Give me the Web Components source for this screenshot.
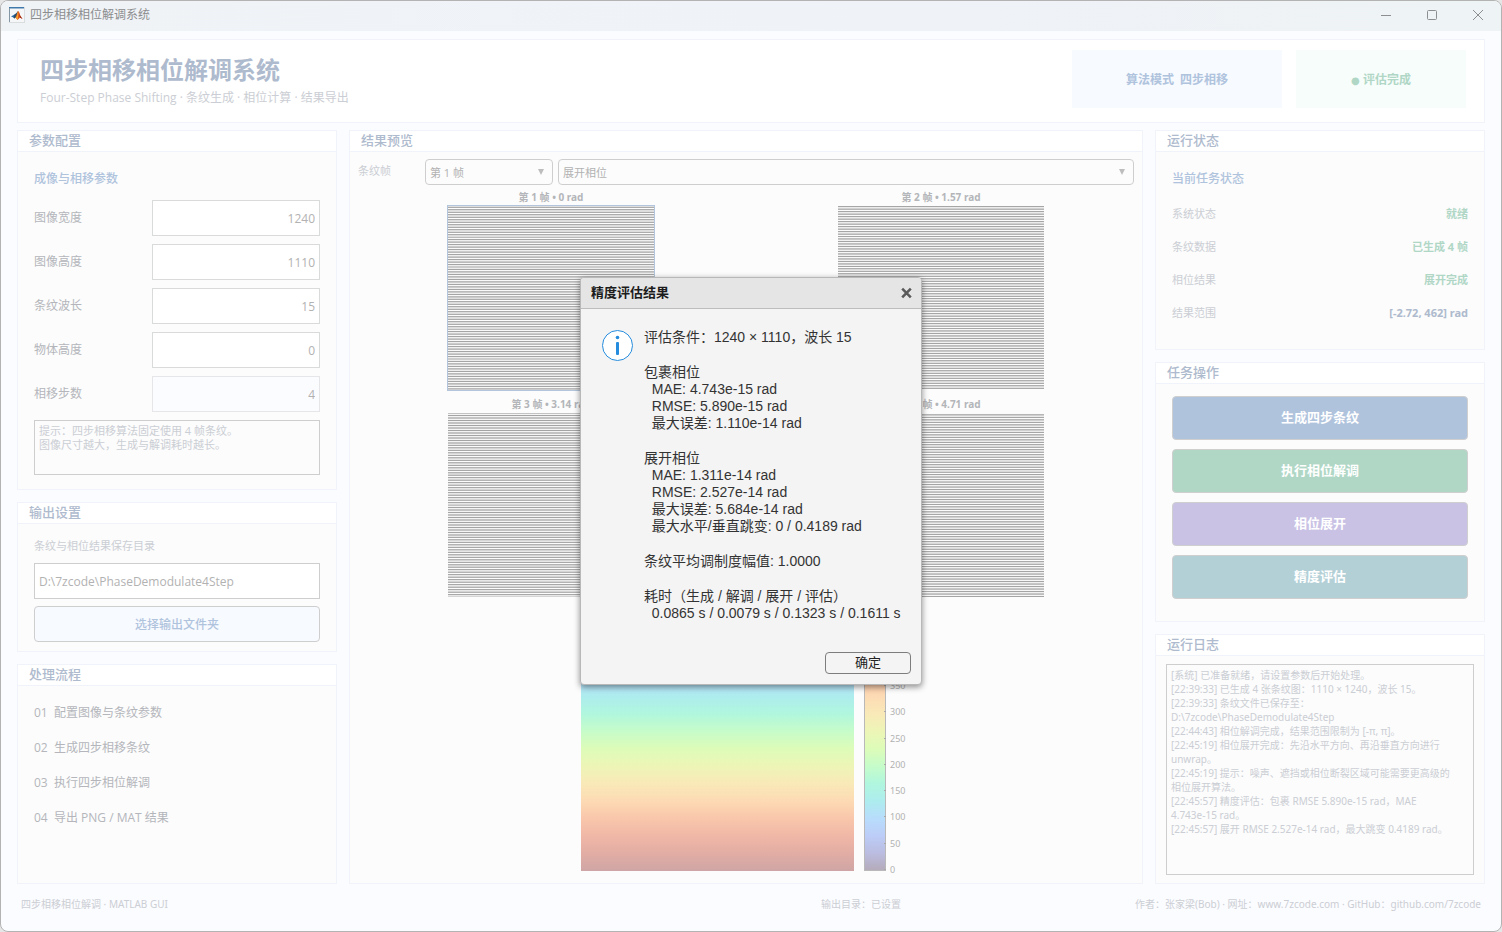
<!DOCTYPE html>
<html lang="zh-CN">
<head>
<meta charset="utf-8">
<title>四步相移相位解调系统</title>
<style>
    :root {
        --ui-font: "Open Sans", "Noto Sans CJK SC", sans-serif;
        --small-font: "Noto Sans", "Noto Sans CJK SC", sans-serif;
        --dialog-font: "Liberation Sans", "Noto Sans CJK SC", sans-serif;
        --line: #f0f3fa;
        --navy: #aebacd;
        --blue: #afc3dd;
        --green: #b0d7c6;
        --text: #b4b6bb;
        --muted: #cbced4;
        --box: #cecece;
    }
    body {
        margin: 0;
        background: #e6e6e6;
        font-family: var(--ui-font);
    }
    .dot {
        font-family: "DejaVu Sans", sans-serif;
        font-size: 10px;
    }
</style>
</head>
<body>

<app-window label="四步相移相位解调系统">
    <app-header heading="四步相移相位解调系统" sub="Four-Step Phase Shifting · 条纹生成 · 相位计算 · 结果导出">
        <status-badge tone="blue">算法模式&nbsp; 四步相移</status-badge>
        <status-badge tone="green"><span class="dot">●</span> 评估完成</status-badge>
    </app-header>
    <main-grid>
        <param-column slot="left"></param-column>
        <preview-panel slot="center"></preview-panel>
        <task-column slot="right"></task-column>
    </main-grid>
    <app-footer>
        <span>四步相移相位解调 · MATLAB GUI</span>
        <span>输出目录：已设置</span>
        <span>作者：张家梁(Bob) · 网址：www.7zcode.com · GitHub：github.com/7zcode</span>
    </app-footer>
    <result-dialog slot="overlay" heading="精度评估结果"></result-dialog>
</app-window>

<script>
class BaseElement extends HTMLElement {
    constructor() {
        super();
        this.attachShadow({ mode: 'open' });
    }
    connectedCallback() {
        this.shadowRoot.innerHTML = `<style>* { box-sizing: border-box; }</style>` + this.render();
    }
}

class AppWindow extends BaseElement {
    render() {
        return `
            <style>
                :host {
                    display: flex;
                    flex-direction: column;
                    box-sizing: border-box;
                    min-height: 100vh;
                    border: 1px solid #b3b3b3;
                    border-radius: 8px;
                    overflow: hidden;
                    background: #fbfcff;
                }
                .bar {
                    display: flex;
                    align-items: center;
                    height: 30px;
                    padding: 0 0 2px 8px;
                    background: linear-gradient(90deg, #f0f3f6, #eff2f7 60%, #eef3f5);
                    font-size: 12px;
                    color: #8b8d8f;
                }
                .bar span { flex: 1; padding-left: 5px; line-height: 16px; }
                .bar button {
                    width: 46px;
                    height: 28px;
                    padding: 0;
                    border: 0;
                    background: none;
                }
                .bar svg { display: block; margin: auto; }
                .bar .logo { margin: 0; }
                .client {
                    position: relative;
                    flex: 1;
                    display: flex;
                    flex-direction: column;
                    padding: 8px 16px 0;
                }
                .overlay {
                    position: absolute;
                    inset: 0;
                    display: grid;
                    place-items: center;
                }
            </style>
            <div class="bar">
                <svg class="logo" width="16" height="16" viewBox="0 0 16 16">
                    <rect x="0" y="0" width="16" height="16" fill="#d9dde0"/>
                    <rect x="1" y="2" width="14" height="13" fill="#f4f6f8"/>
                    <rect x="0" y="0" width="15" height="1" fill="#3f78aa"/>
                    <rect x="0" y="1" width="15" height="1" fill="#9dbad2"/>
                    <rect x="0" y="1" width="1" height="14" fill="#8497a5"/>
                    <path d="M2 9.5 L5.5 7.5 L7.5 8.5 L5.5 11.5 L4.5 10.5 Z" fill="#2c6fa8"/>
                    <path d="M5.5 7.5 Q7 7 9 4 L8.5 9 L5.5 11.5 L4.5 10.5 Z" fill="#28506d"/>
                    <path d="M9 4 Q10 4 11 8 L13.5 12 L11 10.5 L8.5 13 L6.5 10.5 Z" fill="#e0561a"/>
                    <path d="M9 4 Q9.8 7 8.5 13 L6.8 11 Q8.5 8.5 9 4 Z" fill="#f5a832"/>
                    <path d="M10 5 Q10.5 9 13.5 12 L11 10.5 Z" fill="#8c1b12"/>
                </svg>
                <span>${this.getAttribute('label')}</span>
                <button aria-label="最小化"><svg width="10" height="10"><path d="M0 5.5h10" stroke="#8c8e90"/></svg></button>
                <button aria-label="最大化"><svg width="10" height="10"><rect x=".5" y=".5" width="9" height="9" rx="1" fill="none" stroke="#8c8e90"/></svg></button>
                <button aria-label="关闭"><svg width="10" height="10"><path d="M0 0l10 10M10 0l-10 10" stroke="#8c8e90"/></svg></button>
            </div>
            <div class="client">
                <slot></slot>
                <div class="overlay"><slot name="overlay"></slot></div>
            </div>
        `;
    }
}

class AppHeader extends BaseElement {
    render() {
        return `
            <style>
                :host {
                    display: flex;
                    gap: 14px;
                    padding: 10px 18px 14px 22px;
                    border: 1px solid var(--line);
                    background: #fff;
                }
                .titles { flex: 1; }
                h1 { margin: 2px 0 0; font-size: 24px; line-height: 36px; color: var(--navy); }
                p { margin: 0; font-size: 12px; line-height: 20px; color: var(--muted); }
            </style>
            <div class="titles">
                <h1>${this.getAttribute('heading')}</h1>
                <p>${this.getAttribute('sub')}</p>
            </div>
            <slot></slot>
        `;
    }
}

class StatusBadge extends BaseElement {
    render() {
        const green = this.getAttribute('tone') === 'green';
        return `
            <style>
                :host {
                    display: flex;
                    align-items: center;
                    justify-content: center;
                    width: ${green ? 170 : 210}px;
                    height: 58px;
                    background: ${green ? '#f7fdfb' : '#f7faff'};
                    color: var(--${green ? 'green' : 'blue'});
                    font-size: 12px;
                    font-weight: bold;
                }
            </style>
            <div><slot></slot></div>
        `;
    }
}

class MainGrid extends BaseElement {
    render() {
        return `
            <style>
                :host {
                    flex: 1;
                    display: grid;
                    grid-template-columns: 320px minmax(0, 1fr) 330px;
                    gap: 12px;
                    margin-top: 7px;
                }
            </style>
            <slot name="left"></slot>
            <slot name="center"></slot>
            <slot name="right"></slot>
        `;
    }
}

class UiPanel extends BaseElement {
    render() {
        return `
            <style>
                :host {
                    display: flex;
                    flex-direction: column;
                    box-sizing: border-box;
                    border: 1px solid var(--line);
                    background: #fcfcfc;
                }
                h2 {
                    margin: 0;
                    padding-left: 11px;
                    height: 21px;
                    border-bottom: 1px solid var(--line);
                    background: #fff;
                    font-size: 13px;
                    font-weight: 500;
                    line-height: 18px;
                    color: var(--navy);
                }
                .body { flex: 1; display: flex; flex-direction: column; }
            </style>
            <h2>${this.getAttribute('heading')}</h2>
            <div class="body"><slot></slot></div>
        `;
    }
}

class ParamColumn extends BaseElement {
    render() {
        const params = [
            ['图像宽度', '1240'],
            ['图像高度', '1110'],
            ['条纹波长', '15'],
            ['物体高度', '0'],
            ['相移步数', '4']
        ];
        const steps = ['01&nbsp; 配置图像与条纹参数', '02&nbsp; 生成四步相移条纹', '03&nbsp; 执行四步相位解调', '04&nbsp; 导出 PNG / MAT 结果'];

        const paramsHtml = params.map(([label, value], i) => `
            <div class="row">
                <label for="p${i}">${label}</label>
                <input id="p${i}" value="${value}" ${i === 4 ? 'readonly' : ''}>
            </div>`).join('');

        return `
            <style>
                :host { display: flex; flex-direction: column; gap: 12px; }
                .params { display: flex; flex-direction: column; gap: 8px; padding: 12px 16px 14px; }
                .caption { height: 28px; line-height: 30px; font-size: 12px; font-weight: 500; color: var(--blue); }
                .row { display: flex; align-items: center; justify-content: space-between; font-size: 12px; color: var(--text); }
                .row label { padding-bottom: 2px; }
                input, textarea, button { font-family: inherit; font-size: 12px; color: #b2b2b2; border: 1px solid var(--box); background: #fff; }
                input { height: 36px; padding: 0 4px; }
                .row input { width: 168px; text-align: right; border-color: #d9dbdb; }
                .row input[readonly] { background: #fbfcff; border-color: #e6e6e8; }
                textarea {
                    display: block;
                    height: 55px;
                    padding: 3px 4px;
                    resize: none;
                    background: #fcfcfc;
                    font-size: 11px;
                    line-height: 14px;
                    color: var(--muted);
                }
                .output { display: flex; flex-direction: column; gap: 7px; padding: 10px 16px 9px; }
                .output label { height: 22px; font-size: 11px; line-height: 24px; color: var(--muted); }
                button { height: 36px; padding-bottom: 2px; border-radius: 4px; background: #f7faff; color: var(--blue); font-weight: 500; }
                ol { margin: 0; padding: 9px 16px; list-style: none; }
                li { font-size: 12px; line-height: 35px; color: var(--text); }
                .flow { flex: 1; }
            </style>
            <ui-panel heading="参数配置">
                <div class="params">
                    <div class="caption">成像与相移参数</div>
                    ${paramsHtml}
                    <textarea readonly aria-label="提示">提示：四步相移算法固定使用 4 帧条纹。
图像尺寸越大，生成与解调耗时越长。</textarea>
                </div>
            </ui-panel>
            <ui-panel heading="输出设置">
                <div class="output">
                    <label for="dir">条纹与相位结果保存目录</label>
                    <input id="dir" value="D:\\7zcode\\PhaseDemodulate4Step">
                    <button>选择输出文件夹</button>
                </div>
            </ui-panel>
            <ui-panel class="flow" heading="处理流程">
                <ol>${steps.map(s => `<li>${s}</li>`).join('')}</ol>
            </ui-panel>
        `;
    }
}

class UiSelect extends BaseElement {
    render() {
        const options = this.getAttribute('options').split(',');
        return `
            <style>
                :host { display: block; position: relative; }
                select {
                    appearance: none;
                    display: block;
                    width: 100%;
                    height: 26px;
                    padding: 0 4px;
                    border: 1px solid var(--box);
                    border-radius: 4px;
                    background: #fcfcfc;
                    font-family: inherit;
                    font-size: 11px;
                    color: #b2b2b2;
                }
                svg { position: absolute; right: 8px; top: 10px; }
            </style>
            <select aria-label="${this.getAttribute('label')}">${options.map(o => `<option>${o}</option>`).join('')}</select>
            <svg width="8" height="7"><path d="M1 0h6L4 6z" fill="#bdbdbd"/></svg>
        `;
    }
}

// one phase-shifted fringe image, sampled row by row
class FringeFrame extends BaseElement {
    render() {
        const W = 206, H = 184;
        const phase = Number(this.getAttribute('phase'));
        const selected = this.hasAttribute('selected');
        let rows = '';
        for (let y = 0; y < H; y++) {
            const py = Math.floor((y + 0.5) * 1110 / H);
            const v = 0.5 + 0.5 * Math.cos(2 * Math.PI * py / 15 + phase);
            const g = Math.round(164 + 89 * v);
            rows += `<rect y="${y}" width="${W}" height="1" fill="rgb(${g},${g},${g})"/>`;
        }
        return `
            <style>
                :host { display: flex; flex-direction: column; align-items: center; gap: 2px; }
                .title { font-family: var(--small-font); font-size: 10px; font-weight: bold; line-height: 14px; color: #b3b5b9; }
                svg { display: block; outline: ${selected ? '1px solid #b3c5dc' : 'none'}; }
            </style>
            <div class="title">${this.getAttribute('label')}</div>
            <svg width="${W}" height="${H}" shape-rendering="crispEdges">${rows}</svg>
        `;
    }
}

class PhaseMap extends BaseElement {
    render() {
        const turbo = ['#30123b', '#4145ab', '#4675ed', '#39a2fc', '#1bcfd4', '#24eca6', '#61fc6c', '#a4fc3b', '#d1e834', '#f3c63a', '#fe9b2d', '#f36315', '#d93806', '#b11901', '#7a0403'];
        const ticks = [450, 400, 350, 300, 250, 200, 150, 100, 50, 0];
        const ticksHtml = ticks.map(t => {
            const y = Math.round(243 - t * 243 / 462);
            return `<path d="M20 ${y}.5h2" stroke="#a9a9a9"/><text x="26" y="${y + 4}">${t}</text>`;
        }).join('');
        const stops = turbo.map((c, i) => `<stop offset="${i / 14}" stop-color="${c}"/>`).join('');

        return `
            <style>
                :host { display: flex; justify-content: center; gap: 10px; }
                .map { width: 273px; height: 245px; opacity: 0.35; background: linear-gradient(${turbo.join(',')}); }
                text { font-family: var(--small-font); font-size: 9px; fill: #b2b2b2; }
                svg { display: block; overflow: visible; }
            </style>
            <div class="map"></div>
            <svg width="22" height="245">
                <defs><linearGradient id="bar" x1="0" y1="1" x2="0" y2="0">${stops}</linearGradient></defs>
                <rect width="22" height="245" fill="url(#bar)" opacity="0.35"/>
                <rect x=".5" y=".5" width="21" height="244" fill="none" stroke="#b9b9b9"/>
                ${ticksHtml}
            </svg>
        `;
    }
}

class PreviewPanel extends BaseElement {
    render() {
        return `
            <style>
                :host { display: flex; flex-direction: column; }
                ui-panel { flex: 1; }
                .body { flex: 1; display: flex; flex-direction: column; padding: 7px 8px 12px; }
                .tools { display: grid; grid-template-columns: 62px 128px 1fr; gap: 5px; font-size: 11px; line-height: 24px; color: var(--muted); }
                .frames { display: grid; grid-template-columns: 1fr 1fr; gap: 7px 0; margin: 5px -2px 0; }
                phase-map { margin-top: auto; margin-right: 26px; }
            </style>
            <ui-panel heading="结果预览">
                <div class="body">
                    <div class="tools">
                        <span>条纹帧</span>
                        <ui-select label="条纹帧" options="第 1 帧,第 2 帧,第 3 帧,第 4 帧"></ui-select>
                        <ui-select label="结果类型" options="展开相位,包裹相位"></ui-select>
                    </div>
                    <div class="frames">
                        <fringe-frame label="第 1 帧 • 0 rad" phase="0" selected></fringe-frame>
                        <fringe-frame label="第 2 帧 • 1.57 rad" phase="1.57"></fringe-frame>
                        <fringe-frame label="第 3 帧 • 3.14 rad" phase="3.14"></fringe-frame>
                        <fringe-frame label="第 4 帧 • 4.71 rad" phase="4.71"></fringe-frame>
                    </div>
                    <phase-map></phase-map>
                </div>
            </ui-panel>
        `;
    }
}

class TaskColumn extends BaseElement {
    render() {
        const states = [
            ['系统状态', '就绪', 'green'],
            ['条纹数据', '已生成 4 帧', 'green'],
            ['相位结果', '展开完成', 'green'],
            ['结果范围', '[-2.72, 462] rad', 'navy']
        ];
        const actions = [
            ['生成四步条纹', '#afc3dd'],
            ['执行相位解调', '#b0d7c6'],
            ['相位展开', '#c9c2e5'],
            ['精度评估', '#b3d0d7']
        ];
        const log = [
            '[系统] 已准备就绪，请设置参数后开始处理。',
            '[22:39:33] 已生成 4 张条纹图：1110 × 1240，波长 15。',
            '[22:39:33] 条纹文件已保存至：',
            'D:\\7zcode\\PhaseDemodulate4Step',
            '[22:44:43] 相位解调完成，结果范围限制为 [-π, π]。',
            '[22:45:19] 相位展开完成：先沿水平方向、再沿垂直方向进行',
            'unwrap。',
            '[22:45:19] 提示：噪声、遮挡或相位断裂区域可能需要更高级的',
            '相位展开算法。',
            '[22:45:57] 精度评估：包裹 RMSE 5.890e-15 rad，MAE',
            '4.743e-15 rad。',
            '[22:45:57] 展开 RMSE 2.527e-14 rad，最大跳变 0.4189 rad。'
        ];

        return `
            <style>
                :host { display: flex; flex-direction: column; gap: 12px; }
                .states { padding: 12px 16px 20px; }
                .caption { height: 28px; margin-bottom: 5px; line-height: 30px; font-size: 12px; font-weight: 500; color: var(--blue); }
                .row { display: flex; justify-content: space-between; height: 33px; line-height: 33px; font-size: 11px; color: var(--muted); }
                .row b { font-family: var(--small-font); color: var(--green); }
                .row b.navy { color: var(--navy); }
                .actions { display: flex; flex-direction: column; gap: 9px; padding: 12px 16px 22px; }
                button {
                    height: 44px;
                    padding-bottom: 4px;
                    border: 1px solid #cfcfcf;
                    border-radius: 4px;
                    font-family: inherit;
                    font-size: 13px;
                    font-weight: bold;
                    color: #fff;
                }
                .log { flex: 1; }
                .log div { flex: 1; display: flex; padding: 8px 10px; }
                textarea {
                    flex: 1;
                    padding: 3px 4px;
                    border: 1px solid var(--box);
                    background: #fcfcfc;
                    resize: none;
                    overflow: hidden;
                    white-space: pre;
                    font-family: var(--small-font);
                    font-size: 10px;
                    line-height: 14px;
                    color: var(--muted);
                }
            </style>
            <ui-panel heading="运行状态">
                <div class="states">
                    <div class="caption">当前任务状态</div>
                    ${states.map(s => `<div class="row"><span>${s[0]}</span><b class="${s[2]}">${s[1]}</b></div>`).join('')}
                </div>
            </ui-panel>
            <ui-panel heading="任务操作">
                <div class="actions">
                    ${actions.map(a => `<button style="background:${a[1]}">${a[0]}</button>`).join('')}
                </div>
            </ui-panel>
            <ui-panel class="log" heading="运行日志">
                <div><textarea readonly aria-label="运行日志">${log.join('\n')}</textarea></div>
            </ui-panel>
        `;
    }
}

class AppFooter extends BaseElement {
    render() {
        return `
            <style>
                :host {
                    display: grid;
                    grid-template-columns: 30fr 24fr 19fr;
                    height: 47px;
                    padding: 0 4px;
                    font-family: var(--small-font);
                    font-size: 10px;
                    line-height: 41px;
                    color: var(--muted);
                    white-space: nowrap;
                }
                ::slotted(:nth-child(2)) { text-align: center; }
                ::slotted(:nth-child(3)) { text-align: right; }
            </style>
            <slot></slot>
        `;
    }
}

class ResultDialog extends BaseElement {
    render() {
        const blocks = [
            ['评估条件：1240 × 1110，波长 15'],
            ['包裹相位', '  MAE: 4.743e-15 rad', '  RMSE: 5.890e-15 rad', '  最大误差: 1.110e-14 rad'],
            ['展开相位', '  MAE: 1.311e-14 rad', '  RMSE: 2.527e-14 rad', '  最大误差: 5.684e-14 rad', '  最大水平/垂直跳变: 0 / 0.4189 rad'],
            ['条纹平均调制度幅值: 1.0000'],
            ['耗时（生成 / 解调 / 展开 / 评估）', '  0.0865 s / 0.0079 s / 0.1323 s / 0.1611 s']
        ];
        return `
            <style>
                :host {
                    display: block;
                    box-sizing: border-box;
                    width: 342px;
                    border: 1px solid #b8b8b8;
                    border-radius: 4px;
                    overflow: hidden;
                    background: #f4f4f4;
                    box-shadow: 0 2px 6px rgba(0, 0, 0, 0.45);
                    font-family: var(--dialog-font);
                }
                header {
                    display: flex;
                    align-items: center;
                    justify-content: space-between;
                    height: 31px;
                    padding: 0 9px 0 10px;
                    border-bottom: 1px solid #bdbdbd;
                    background: #e5e5e5;
                    font-size: 13px;
                    font-weight: bold;
                    color: #1c1c1c;
                }
                header span { padding-bottom: 3px; }
                header button { padding: 0; border: 0; background: none; }
                svg { display: block; }
                .content { display: flex; gap: 11px; padding: 20px 18px 30px 21px; }
                .content svg { flex: none; margin-top: 1px; }
                .text { display: flex; flex-direction: column; gap: 18px; font-size: 14px; line-height: 17px; color: #333; white-space: pre; }
                .foot { display: flex; justify-content: flex-end; padding: 0 10px 10px; }
                .foot button {
                    width: 86px;
                    height: 22px;
                    padding: 0;
                    border: 1px solid #7d7d7d;
                    border-radius: 4px;
                    background: #f4f4f4;
                    font-family: inherit;
                    font-size: 13px;
                    line-height: 18px;
                    color: #222;
                }
            </style>
            <div role="dialog" aria-labelledby="t">
                <header>
                    <span id="t">${this.getAttribute('heading')}</span>
                    <button aria-label="关闭"><svg width="11" height="12"><path d="M1.2 1.7l8.6 8.6M9.8 1.7l-8.6 8.6" stroke="#5a5a5a" stroke-width="2.6"/></svg></button>
                </header>
                <div class="content">
                    <svg width="31" height="31">
                        <circle cx="15.5" cy="15.5" r="15" fill="#fff" stroke="#268cdd"/>
                        <circle cx="15.5" cy="7.5" r="1.8" fill="#268cdd"/>
                        <rect x="14" y="12" width="3" height="13" rx="1" fill="#268cdd"/>
                    </svg>
                    <div class="text">${blocks.map(b => `<div>${b.map(l => `<div>${l}</div>`).join('')}</div>`).join('')}</div>
                </div>
                <div class="foot"><button>确定</button></div>
            </div>
        `;
    }
}

customElements.define('app-window', AppWindow);
customElements.define('app-header', AppHeader);
customElements.define('status-badge', StatusBadge);
customElements.define('main-grid', MainGrid);
customElements.define('ui-panel', UiPanel);
customElements.define('param-column', ParamColumn);
customElements.define('ui-select', UiSelect);
customElements.define('fringe-frame', FringeFrame);
customElements.define('phase-map', PhaseMap);
customElements.define('preview-panel', PreviewPanel);
customElements.define('task-column', TaskColumn);
customElements.define('app-footer', AppFooter);
customElements.define('result-dialog', ResultDialog);
</script>
</body>
</html>
